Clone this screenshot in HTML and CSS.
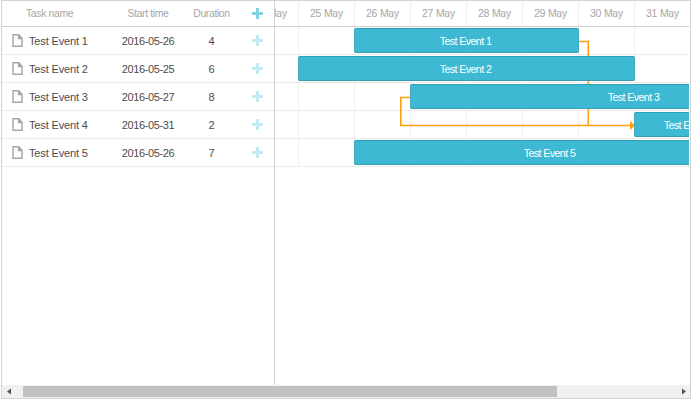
FILE: index.html
```html
<!DOCTYPE html>
<html lang="en">
<head>
<meta charset="utf-8">
<title>Gantt</title>
<link rel="stylesheet" href="styles.css">
</head>
<body>
<svg class="defs" width="0" height="0">
  <symbol id="file" viewBox="0 0 11 13"><path fill-rule="evenodd" d="M.3 0H7.2L10.8 3.9V13H.3Z M1.8 1.5V11.5H9.3V5.2H5.9V1.5Z" fill="#a9a9a9"/></symbol>
  <symbol id="plus" viewBox="0 0 11 11"><path d="M4 0H7V4H11V7H7V11H4V7H0V4H4Z" fill="currentColor"/></symbol>
</svg>
<main class="gantt">
  <div class="content">
    <section class="grid">
      <div class="row head"><span class="name">Task name</span><span>Start time</span><span>Duration</span><svg class="plus"><use href="#plus"/></svg></div>
      <div class="row"><span class="name"><svg class="file"><use href="#file"/></svg>Test Event 1</span><span class="date">2016-05-26</span><span>4</span><svg class="plus"><use href="#plus"/></svg></div>
      <div class="row"><span class="name"><svg class="file"><use href="#file"/></svg>Test Event 2</span><span class="date">2016-05-25</span><span>6</span><svg class="plus"><use href="#plus"/></svg></div>
      <div class="row"><span class="name"><svg class="file"><use href="#file"/></svg>Test Event 3</span><span class="date">2016-05-27</span><span>8</span><svg class="plus"><use href="#plus"/></svg></div>
      <div class="row"><span class="name"><svg class="file"><use href="#file"/></svg>Test Event 4</span><span class="date">2016-05-31</span><span>2</span><svg class="plus"><use href="#plus"/></svg></div>
      <div class="row"><span class="name"><svg class="file"><use href="#file"/></svg>Test Event 5</span><span class="date">2016-05-26</span><span>7</span><svg class="plus"><use href="#plus"/></svg></div>
    </section>
    <section class="timeline">
      <div class="scale"><span>24 May</span><span>25 May</span><span>26 May</span><span>27 May</span><span>28 May</span><span>29 May</span><span>30 May</span><span>31 May</span></div>
      <div class="tasks">
        <svg class="links" width="448" height="140" viewBox="242 27 448 140">
          <path d="M578 41.5H588.3V125.5M411 97.5H400.8V125.5H631" fill="none" stroke="#ffa011" stroke-width="1.6"/>
          <path d="M630 121L635 125.5L630 130Z" fill="#ffa011"/>
        </svg>
        <div class="bar e1">Test Event 1</div>
        <div class="bar e2">Test Event 2</div>
        <div class="bar e3">Test Event 3</div>
        <div class="bar e4">Test Event 4</div>
        <div class="bar e5">Test Event 5</div>
      </div>
    </section>
  </div>
  <div class="scrollbar">
    <svg width="21" height="13"><path d="M9 3.5V9.5L5 6.5Z" fill="#505050"/></svg>
    <div class="track"><div class="thumb"></div></div>
    <svg width="14" height="13"><path d="M6 3.5V9.5L10 6.5Z" fill="#505050"/></svg>
  </div>
</main>
</body>
</html>
```

FILE: styles.css
```css
* { box-sizing: border-box; }
body {
  margin: 0;
  background: #fff;
  font-family: "Liberation Sans", Arial, sans-serif;
}
.defs { position: absolute; }
.gantt {
  width: 690px;
  height: 399px;
  margin-left: 1px;
  border: 1px solid #d4d4d4;
  display: flex;
  flex-direction: column;
}
.content { flex: 1; display: flex; min-height: 0; }
.grid {
  width: 273px;
  flex: none;
  border-right: 1px solid #d4d4d4;
}
.row {
  display: grid;
  grid-template-columns: 114px 64px 63px 28px;
  align-items: center;
  justify-items: center;
  height: 28px;
  border-bottom: 1px solid #ebebeb;
  font-size: 11px;
  letter-spacing: -.15px;
  color: #4c4c4c;
}
.row .name {
  justify-self: start;
  display: flex;
  align-items: center;
  padding-left: 10px;
}
.row .date { letter-spacing: -.4px; }
.row.head, .scale {
  height: 26px;
  border-bottom: 1px solid #cecece;
  font-size: 10.5px;
  color: #a6a6a6;
}
.row.head { letter-spacing: -.4px; }
.row.head span { padding-bottom: 1px; }
.row.head .name { padding-left: 24px; }
.file { width: 11px; height: 13px; margin-right: 6px; }
.plus { width: 11px; height: 11px; color: #c2eaf2; }
.head .plus { color: #7fd3e2; }
.timeline { width: 414px; overflow: hidden; }
.scale {
  display: grid;
  grid-template-columns: repeat(8, 56px);
  margin-left: -33px;
  line-height: 25px;
  letter-spacing: -.25px;
  text-align: center;
  width: 448px;
}
.scale span { border-left: 1px solid #f0f0f0; }
.tasks {
  position: relative;
  display: grid;
  grid-template-columns: repeat(11, 56px);
  grid-template-rows: repeat(5, 28px);
  width: 616px;
  height: 140px;
  margin-left: -33px;
  background:
    repeating-linear-gradient(to bottom, transparent 0 27px, #ebebeb 27px 28px),
    repeating-linear-gradient(to right, #f0f0f0 0 1px, transparent 1px 56px);
}
.links { position: absolute; left: 0; top: 0; }
.bar {
  z-index: 1;
  height: 25px;
  margin: 1px -1px 0 0;
  padding-right: 2px;
  border: 1px solid;
  border-color: #309fb6 #44a9bd #379fb4;
  border-radius: 2px;
  background: #3db9d3;
  color: #fff;
  font-size: 10.7px;
  letter-spacing: -.6px;
  line-height: 24px;
  text-align: center;
}
.e1 { grid-area: 1 / 3 / 2 / 7; }
.e2 { grid-area: 2 / 2 / 3 / 8; }
.e3 { grid-area: 3 / 4 / 4 / 12; }
.e4 { grid-area: 4 / 8 / 5 / 10; }
.e5 { grid-area: 5 / 3 / 6 / 10; }
.scrollbar {
  display: flex;
  height: 13px;
  background: #f0f0f0;
}
.scrollbar svg { flex: none; }
.track { flex: 1; display: flex; padding: 1px 0; }
.thumb { width: 534px; background: #c1c1c1; }
```
